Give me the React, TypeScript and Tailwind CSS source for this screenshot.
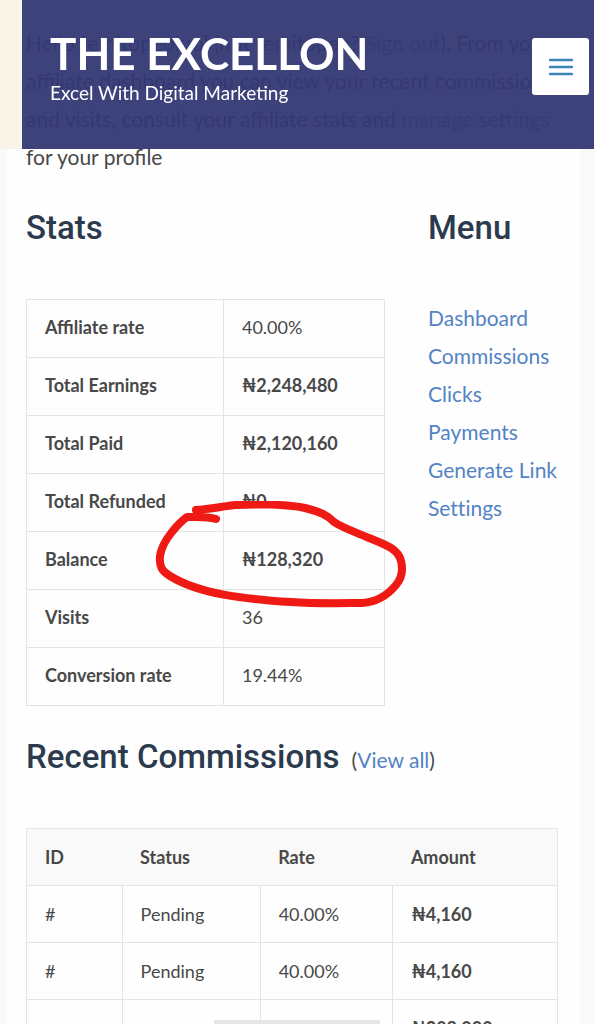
import React from 'react';
import { clsx } from 'clsx';

const stats = [
  { label: 'Affiliate rate', value: '40.00%' },
  { label: 'Total Earnings', value: '₦2,248,480', strong: true },
  { label: 'Total Paid', value: '₦2,120,160', strong: true },
  { label: 'Total Refunded', value: '₦0', strong: true },
  { label: 'Balance', value: '₦128,320', strong: true, marked: true },
  { label: 'Visits', value: '36' },
  { label: 'Conversion rate', value: '19.44%' },
];

const menu = ['Dashboard', 'Commissions', 'Clicks', 'Payments', 'Generate Link', 'Settings'];

const commissions = [
  { id: '#', status: 'Pending', rate: '40.00%', amount: '₦4,160' },
  { id: '#', status: 'Pending', rate: '40.00%', amount: '₦4,160' },
  { id: '', status: '', rate: '', amount: '₦208,000' },
];

const Header = () => (
  <header className="fixed inset-x-0 top-0 z-20 flex h-[149px]">
    <div className="w-[22px] shrink-0 bg-[#f8f5e8]" />
    <div className="flex flex-1 items-start justify-between bg-[#333874]/95 pl-7 pr-[5px]">
      <div className="pt-7 text-white">
        <h1 className="text-[44px] font-bold leading-[50px]">THE EXCELLON</h1>
        <p className="text-[19px] leading-[30px]">Excel With Digital Marketing</p>
      </div>
      <button
        aria-label="Toggle menu"
        className="mt-[38px] flex h-[57px] w-[57px] items-center justify-center rounded-[3px] bg-white"
      >
        <svg width="24" height="18" viewBox="0 0 24 18" fill="none" stroke="#3a85b8" strokeWidth="2.4" strokeLinecap="round">
          <path d="M1 2h22M1 9h22M1 16h22" />
        </svg>
      </button>
    </div>
  </header>
);

// red pen loop drawn around the balance
const PenCircle = () => (
  <svg
    className="pointer-events-none absolute -left-[87px] -top-[44px] z-10 max-w-none"
    width="252"
    height="108"
    viewBox="156 502 252 108"
    fill="none"
    stroke="#ef1a14"
    strokeWidth="8"
    strokeLinecap="round"
    strokeLinejoin="round"
  >
    <path d="M217 520C207 517 197 518 188 518C181 523 163 541 161 557C160 568 163 572 171 577C200 595 245 600 292 603C320 605 350 604 363 604C378 603 388 597 397 586C403 579 404 570 402 562C399 549 384 545 370 539C354 532 344 529 335 523C328 516 322 513 306 509C287 505 255 505 237 506C225 507 212 510 197 511" />
  </svg>
);

const StatsTable = () => (
  <table className="w-full table-fixed border-collapse text-lg">
    <tbody>
      {stats.map((row) => (
        <tr key={row.label} className="h-[58px]">
          <th scope="row" className="w-[55%] border border-[#e4e4e4] px-[18px] pb-[3px] text-left font-bold">
            {row.label}
          </th>
          <td className={clsx('border border-[#e4e4e4] px-[18px] pb-[3px]', row.strong && 'font-bold')}>
            <div className="relative">
              {row.value}
              {row.marked && <PenCircle />}
            </div>
          </td>
        </tr>
      ))}
    </tbody>
  </table>
);

const CommissionsTable = () => (
  <table className="w-full table-fixed border-collapse border border-[#e4e4e4] text-lg">
    <thead className="bg-[#f9f9f9]">
      <tr className="h-[57px] text-left">
        <th className="w-[18%] px-[18px] font-bold">ID</th>
        <th className="w-[26%] px-[18px] font-bold">Status</th>
        <th className="w-[25%] px-[18px] font-bold">Rate</th>
        <th className="px-[18px] font-bold">Amount</th>
      </tr>
    </thead>
    <tbody>
      {commissions.map((row, i) => (
        <tr key={i} className="h-[57px]">
          <td className="border border-[#e4e4e4] px-[18px]">{row.id}</td>
          <td className="border border-[#e4e4e4] px-[18px]">{row.status}</td>
          <td className="border border-[#e4e4e4] px-[18px]">{row.rate}</td>
          <td className="border border-[#e4e4e4] px-[18px] font-bold">{row.amount}</td>
        </tr>
      ))}
    </tbody>
  </table>
);

const App = () => {
  return (
    <div className="h-screen overflow-hidden bg-[#f9f9f9] pl-[7px] pr-[14px] font-['Lato',sans-serif] text-[#484848]">
      <Header />
      <main className="min-h-screen bg-[#fefefe] pl-[19px] pr-[22px] pt-6">
        <p className="text-[21px] leading-[38px]">
          Hello temitopeoluol (not temitopeo? <a href="#" className="text-[#4a7fd0]">Sign out</a>). From your
          affiliate dashboard you can view your recent commissions and visits, consult your affiliate stats and{' '}
          <a href="#" className="text-[#4a7fd0]">manage settings</a> for your profile
        </p>

        <div className="mt-7 flex justify-between">
          <section className="w-[67.5%]">
            <h2 className="mb-[47px] font-['Roboto'] text-[33px] font-medium leading-[48px] text-[#2c3a4d]">Stats</h2>
            <StatsTable />
          </section>
          <aside className="w-[130px]">
            <h2 className="mb-[47px] font-['Roboto'] text-[33px] font-medium leading-[48px] text-[#2c3a4d]">Menu</h2>
            <nav className="flex flex-col whitespace-nowrap text-[21px] leading-[38px] text-[#5383c4] [font-variant-ligatures:none]">
              {menu.map((item) => (
                <a key={item} href="#">{item}</a>
              ))}
            </nav>
          </aside>
        </div>

        <section className="mt-[27px]">
          <div className="mb-[47px] flex items-baseline gap-3">
            <h2 className="font-['Roboto'] text-[33px] font-medium leading-[48px] text-[#2c3a4d]">Recent Commissions</h2>
            <span className="text-[21px]">
              (<a href="#" className="text-[#5383c4]">View all</a>)
            </span>
          </div>
          <CommissionsTable />
        </section>
      </main>
      <div className="fixed bottom-0 left-[36%] z-10 h-1 w-[28%] bg-[#e6e6e6]" />
    </div>
  );
};

export default App;
